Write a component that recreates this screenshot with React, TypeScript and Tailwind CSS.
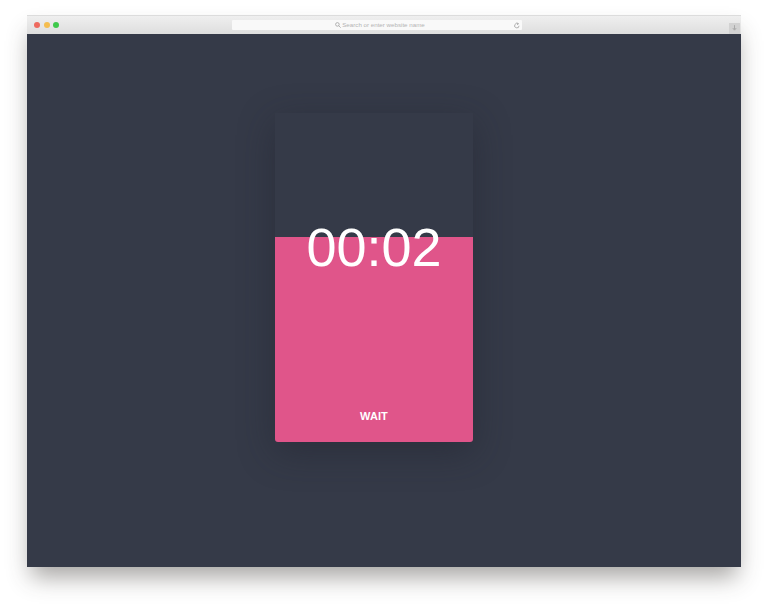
import React from 'react';

const sans = "font-['Liberation_Sans',Arial,sans-serif]";

function TitleBar() {
  return (
    <div className="flex h-[19px] items-center bg-gradient-to-b from-[#efefef] to-[#dedede] pl-[7px] border-t border-[#dcdcdc]">
      <div className="flex w-[198px] items-center gap-[3.5px]">
        <span className="h-[6px] w-[6px] rounded-full bg-[#ee6a5f]" />
        <span className="h-[6px] w-[6px] rounded-full bg-[#f5bd4f]" />
        <span className="h-[6px] w-[6px] rounded-full bg-[#3ec94b]" />
      </div>
      <div className="relative flex h-[10px] w-[290px] items-center justify-center rounded-[1px] bg-[#f9f9f9] pl-[6px]">
        <svg width="6" height="6" viewBox="0 0 10 10" fill="none" stroke="#999999" strokeWidth="1.2" className="mr-[1px]">
          <circle cx="4" cy="4" r="3" />
          <path d="M6.3 6.3 9.5 9.5" />
        </svg>
        <span className={`${sans} text-[6.2px] leading-none text-[#b4b4b4]`}>Search or enter website name</span>
        <svg width="6" height="7" viewBox="0 0 10 12" fill="none" stroke="#999999" strokeWidth="1.3" className="absolute right-[2px] top-[1.5px]">
          <path d="M8.5 6.5a3.8 3.8 0 1 1-1.4-3.2" />
          <path d="M5.5 1 7.5 3.2 5.2 4.8" />
        </svg>
      </div>
      <div className="ml-[207px] mt-[6px] flex h-[11px] w-[11px] items-center justify-center bg-[#d2d2d2]">
        <svg width="5" height="7" viewBox="0 0 6 8" fill="none" stroke="#a0a0a0" strokeWidth="1">
          <path d="M3 0v5M1 3.5 3 6l2-2.5" />
        </svg>
      </div>
    </div>
  );
}

function Timer() {
  return (
    <div className="relative flex h-[329px] w-[198px] flex-col overflow-hidden rounded-b-[3px] shadow-[0_10px_36px_rgba(30,34,44,0.45)]">
      <div className="h-[124px] bg-[#353a48]" />
      <div className="flex flex-1 items-end justify-center bg-[#e0558a] pb-[19px]">
        <span className={`${sans} text-[11px] leading-[14px] font-bold tracking-[0.1px] text-white`}>WAIT</span>
      </div>
      <div className={`${sans} absolute inset-x-0 top-[103px] text-center text-[54px] leading-[62px] text-white`}>00:02</div>
    </div>
  );
}

export default function App() {
  return (
    <div className="h-[605px] w-[768px] overflow-hidden bg-white pt-[15px] pl-[27px]">
      <div className="flex h-[552px] w-[714px] flex-col shadow-[0_14px_22px_-4px_rgba(60,55,50,0.45)]">
        <TitleBar />
        <div className="flex-1 bg-[#353a48] pt-[79px] pl-[248px]">
          <Timer />
        </div>
      </div>
    </div>
  );
}
